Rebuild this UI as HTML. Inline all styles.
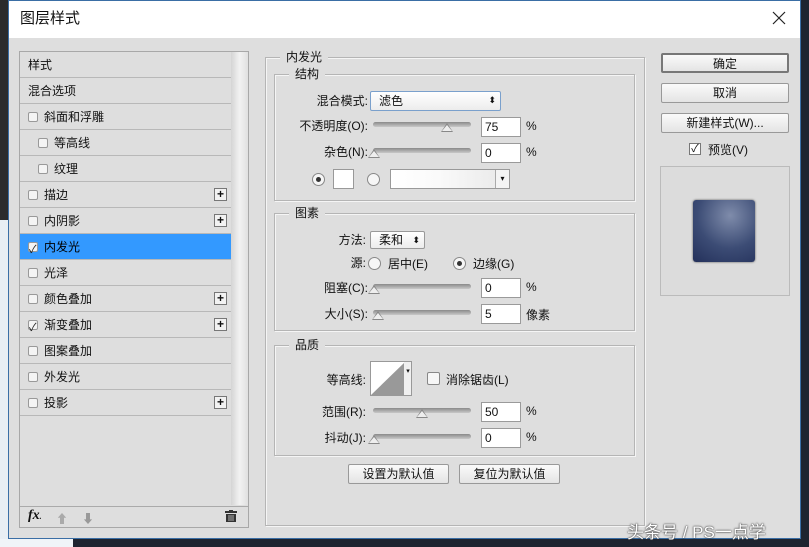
<!DOCTYPE html>
<html><head><meta charset="utf-8"><style>
*{margin:0;padding:0;box-sizing:border-box}
body{width:809px;height:547px;overflow:hidden;background:#1e2430;position:relative;font-family:"Liberation Sans","Noto Sans CJK SC",sans-serif;font-size:12px;color:#111}
.a{position:absolute}
.dlg{left:8px;top:0;width:793px;height:539px;background:#dedede;border:1px solid #3a6ea5}
.title{left:9px;top:1px;width:791px;height:37px;background:#fff}
.row{position:absolute;left:20px;width:211px;height:26px;border-bottom:1px solid #b8b8b8;line-height:27px;padding-left:8px;background:#dedede}
.cb{display:inline-block;width:10px;height:10px;border:1px solid #999;background:#f4f4f4;border-radius:2px;vertical-align:-1px;margin-right:6px;position:relative}
.cb.k::after{content:"✓";position:absolute;left:0;top:-6px;font-size:11px;color:#222}
.plus{position:absolute;right:4px;top:6px;width:13px;height:13px;border:1px solid #777;background:#f2f2f2;font-size:12px;line-height:10px;text-align:center;font-weight:bold}
.grp{position:absolute;border:1px solid #b5b5b5;box-shadow:1px 1px 0 #f5f5f5 inset, 1px 1px 0 #f5f5f5}
.lg{position:absolute;background:#dedede;padding:0 6px;top:-9px;left:14px;line-height:16px}
.lbl{position:absolute;text-align:right;line-height:18px}
.inp{position:absolute;width:40px;height:20px;background:#fff;border:1px solid #9a9a9a;line-height:18px;padding-left:3px}
.sl{position:absolute;height:5px;border-radius:3px;background:linear-gradient(#8a8a8a,#c8c8c8);width:98px}
.th{position:absolute;width:0;height:0;border-left:6px solid transparent;border-right:6px solid transparent;border-bottom:9px solid #888}
.th::after{content:"";position:absolute;left:-5px;top:2px;border-left:5px solid transparent;border-right:5px solid transparent;border-bottom:6px solid #eee}
.btn{position:absolute;height:20px;border:1px solid #999;border-radius:2px;background:linear-gradient(#fafafa,#e4e4e4);text-align:center;line-height:18px}
.rad{position:absolute;width:13px;height:13px;border-radius:50%;border:1px solid #888;background:#f6f6f6}
.rad.on::after{content:"";position:absolute;left:3px;top:3px;width:5px;height:5px;border-radius:50%;background:#333}
</style></head><body>
<div class="a" style="left:0;top:0;width:8px;height:220px;background:#2b2b2b"></div>
<div class="a" style="left:0;top:220px;width:8px;height:327px;background:#e8eef4"></div>
<div class="a" style="left:0;top:539px;width:73px;height:8px;background:#f0f4f8"></div>
<div class="a dlg"></div>
<div class="a title"></div>
<div class="a" style="left:20px;top:9px;font-size:15px;line-height:20px">图层样式</div>
<svg class="a" style="left:772px;top:11px" width="14" height="14"><path d="M1 1L13 13M13 1L1 13" stroke="#222" stroke-width="1.2"/></svg>

<div class="a" style="left:19px;top:51px;width:230px;height:477px;border:1px solid #a8a8a8;background:#dedede"></div>
<div class="a" style="left:231px;top:52px;width:17px;height:453px;background:linear-gradient(90deg,#d4d4d4,#f2f2f2,#e0e0e0)"></div>
<div class="row" style="top:52px">样式</div>
<div class="row" style="top:78px">混合选项</div>
<div class="row" style="top:104px"><span class="cb"></span>斜面和浮雕</div>
<div class="row" style="top:130px;padding-left:18px"><span class="cb"></span>等高线</div>
<div class="row" style="top:156px;padding-left:18px"><span class="cb"></span>纹理</div>
<div class="row" style="top:182px"><span class="cb"></span>描边<span class="plus">+</span></div>
<div class="row" style="top:208px"><span class="cb"></span>内阴影<span class="plus">+</span></div>
<div class="row" style="top:234px;background:#3399ff;color:#000"><span class="cb k"></span>内发光</div>
<div class="row" style="top:260px"><span class="cb"></span>光泽</div>
<div class="row" style="top:286px"><span class="cb"></span>颜色叠加<span class="plus">+</span></div>
<div class="row" style="top:312px"><span class="cb k"></span>渐变叠加<span class="plus">+</span></div>
<div class="row" style="top:338px"><span class="cb"></span>图案叠加</div>
<div class="row" style="top:364px"><span class="cb"></span>外发光</div>
<div class="row" style="top:390px"><span class="cb"></span>投影<span class="plus">+</span></div>
<div class="a" style="left:20px;top:506px;width:228px;height:1px;background:#aaa"></div>
<div class="a" style="left:28px;top:508px;font-style:italic;font-weight:bold;font-family:'Liberation Serif',serif;font-size:14px">fx<span style="font-size:8px">.</span></div>
<div class="a" style="left:56px;top:510px;color:#aaa;font-size:12px">⬆</div>
<div class="a" style="left:82px;top:510px;color:#999;font-size:12px">⬇</div>
<svg class="a" style="left:225px;top:510px" width="12" height="12"><rect x="0" y="1" width="12" height="2" fill="#333"/><rect x="4" y="0" width="4" height="2" fill="#333"/><rect x="1" y="4" width="10" height="8" fill="#333"/><path d="M4 5V11M6 5V11M8 5V11" stroke="#ccc" stroke-width="0.8"/></svg>

<div class="grp" style="left:265px;top:57px;width:380px;height:469px"><div class="lg">内发光</div></div>
<div class="grp" style="left:274px;top:74px;width:361px;height:127px"><div class="lg">结构</div></div>
<div class="lbl" style="left:290px;top:92px;width:78px">混合模式:</div>
<div class="a" style="left:370px;top:91px;width:131px;height:20px;border:1px solid #7aa0cc;border-radius:2px;background:linear-gradient(#fff,#ececec);padding-left:8px;line-height:18px">滤色<span style="position:absolute;right:4px;top:-1px;font-size:9px">⬍</span></div>
<div class="lbl" style="left:280px;top:117px;width:88px">不透明度(O):</div>
<div class="sl" style="left:373px;top:122px"></div><div class="th" style="left:441px;top:123px"></div>
<div class="inp" style="left:481px;top:117px">75</div><div class="a" style="left:526px;top:119px">%</div>
<div class="lbl" style="left:290px;top:143px;width:78px">杂色(N):</div>
<div class="sl" style="left:373px;top:148px"></div><div class="th" style="left:368px;top:149px"></div>
<div class="inp" style="left:481px;top:143px">0</div><div class="a" style="left:526px;top:145px">%</div>
<div class="rad on" style="left:312px;top:173px"></div>
<div class="a" style="left:333px;top:169px;width:21px;height:20px;background:#fff;border:1px solid #999"></div>
<div class="rad" style="left:367px;top:173px"></div>
<div class="a" style="left:390px;top:169px;width:120px;height:20px;border:1px solid #999;background:linear-gradient(90deg,#fff,#fafafa 40%,#e8e8e8);"></div>
<div class="a" style="left:495px;top:170px;width:14px;height:18px;background:#f4f4f4;border-left:1px solid #aaa;font-size:8px;text-align:center;line-height:18px">▾</div>

<div class="grp" style="left:274px;top:213px;width:361px;height:118px"><div class="lg">图素</div></div>
<div class="lbl" style="left:300px;top:231px;width:66px">方法:</div>
<div class="a" style="left:370px;top:231px;width:55px;height:18px;border:1px solid #999;border-radius:2px;background:linear-gradient(#fff,#ececec);padding-left:8px;line-height:16px">柔和<span style="position:absolute;right:4px;top:0;font-size:9px">⬍</span></div>
<div class="lbl" style="left:300px;top:254px;width:66px">源:</div>
<div class="rad" style="left:368px;top:257px"></div><div class="a" style="left:388px;top:255px">居中(E)</div>
<div class="rad on" style="left:453px;top:257px"></div><div class="a" style="left:473px;top:255px">边缘(G)</div>
<div class="lbl" style="left:290px;top:279px;width:78px">阻塞(C):</div>
<div class="sl" style="left:373px;top:284px"></div><div class="th" style="left:368px;top:285px"></div>
<div class="inp" style="left:481px;top:278px">0</div><div class="a" style="left:526px;top:280px">%</div>
<div class="lbl" style="left:290px;top:305px;width:78px">大小(S):</div>
<div class="sl" style="left:373px;top:310px"></div><div class="th" style="left:372px;top:311px"></div>
<div class="inp" style="left:481px;top:304px">5</div><div class="a" style="left:526px;top:306px">像素</div>

<div class="grp" style="left:274px;top:345px;width:361px;height:111px"><div class="lg">品质</div></div>
<div class="lbl" style="left:300px;top:371px;width:66px">等高线:</div>
<div class="a" style="left:370px;top:361px;width:42px;height:35px;border:1px solid #999;background:#fff;overflow:hidden">
<svg width="34" height="33" style="position:absolute;left:0;top:0"><polygon points="0,33 34,0 34,33" fill="#999"/></svg>
<div class="a" style="left:33px;top:0;width:8px;height:33px;background:#f0f0f0;font-size:7px;line-height:20px;text-align:center">▾</div></div>
<div class="a" style="left:427px;top:372px;width:13px;height:13px;border:1px solid #888;background:#f6f6f6;border-radius:2px"></div>
<div class="a" style="left:446px;top:371px">消除锯齿(L)</div>
<div class="lbl" style="left:290px;top:403px;width:76px">范围(R):</div>
<div class="sl" style="left:373px;top:408px"></div><div class="th" style="left:416px;top:409px"></div>
<div class="inp" style="left:481px;top:402px">50</div><div class="a" style="left:526px;top:404px">%</div>
<div class="lbl" style="left:290px;top:429px;width:76px">抖动(J):</div>
<div class="sl" style="left:373px;top:434px"></div><div class="th" style="left:368px;top:435px"></div>
<div class="inp" style="left:481px;top:428px">0</div><div class="a" style="left:526px;top:430px">%</div>
<div class="btn" style="left:348px;top:464px;width:101px">设置为默认值</div>
<div class="btn" style="left:459px;top:464px;width:101px">复位为默认值</div>

<div class="btn" style="left:661px;top:53px;width:128px;border:2px solid #777">确定</div>
<div class="btn" style="left:661px;top:83px;width:128px">取消</div>
<div class="btn" style="left:661px;top:113px;width:128px">新建样式(W)...</div>
<div class="a" style="left:689px;top:143px;width:12px;height:12px;border:1px solid #777;background:#fff;font-size:11px;line-height:10px;text-align:center">✓</div>
<div class="a" style="left:708px;top:141px">预览(V)</div>
<div class="a" style="left:660px;top:166px;width:130px;height:130px;border:1px solid #bbb;background:#dcdcdc"></div>
<div class="a" style="left:693px;top:200px;width:62px;height:62px;border-radius:3px;background:radial-gradient(circle at 60% 25%,#7f8cab,#3c4c75 55%,#23305a);box-shadow:0 0 2px #555"></div>
<div class="a" style="left:627px;top:518px;color:#fff;font-size:17px;text-shadow:0 0 2px #333,0 0 1px #333">头条号 / PS一点学</div>
</body></html>
